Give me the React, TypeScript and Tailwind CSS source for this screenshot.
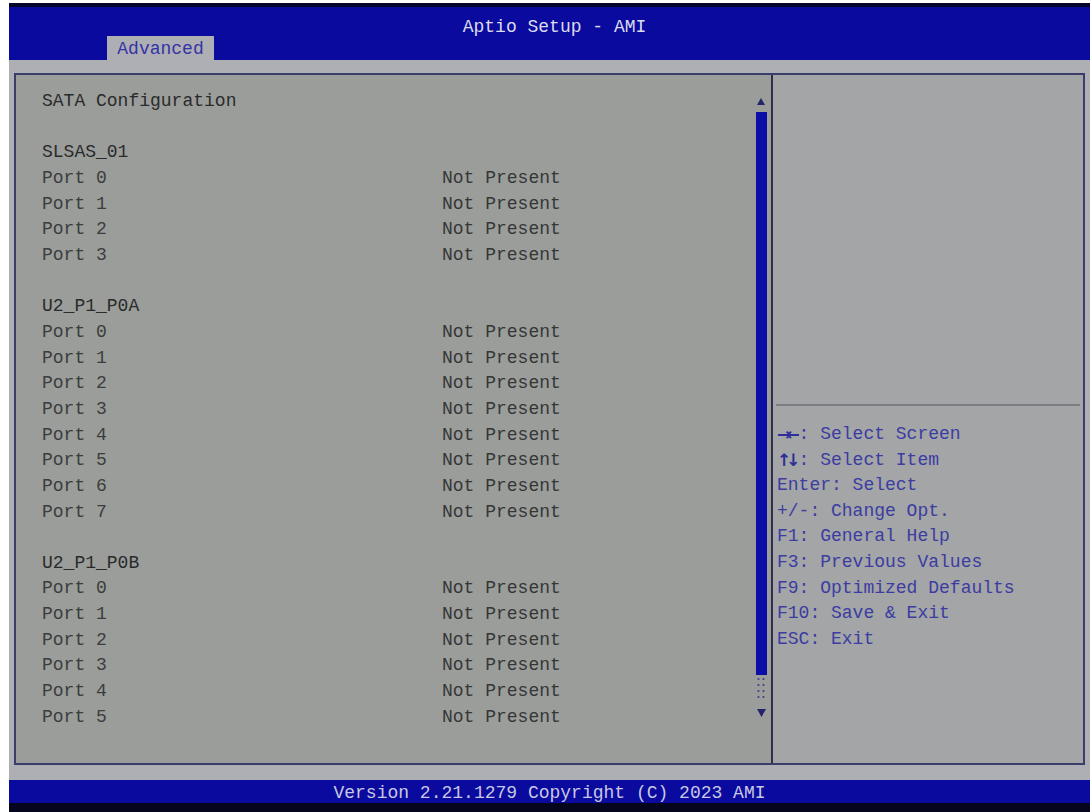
import React from "react";

type Row = { label?: string; value?: string; head?: boolean };

const group = (name: string, count: number): Row[] => [
  { label: name, head: true },
  ...Array.from({ length: count }, (_, i) => ({
    label: `Port ${i}`,
    value: "Not Present",
  })),
];

const rows: Row[] = [
  { label: "SATA Configuration", head: true },
  {},
  ...group("SLSAS_01", 4),
  {},
  ...group("U2_P1_P0A", 8),
  {},
  ...group("U2_P1_P0B", 6),
];

const help: [string, string][] = [
  ["→←", ": Select Screen"],
  ["↑↓", ": Select Item"],
  ["", "Enter: Select"],
  ["", "+/-: Change Opt."],
  ["", "F1: General Help"],
  ["", "F3: Previous Values"],
  ["", "F9: Optimized Defaults"],
  ["", "F10: Save & Exit"],
  ["", "ESC: Exit"],
];

const ScrollBar = () => (
  <div className="w-[12px] mr-[4px] flex flex-col items-center">
    <div className="h-[23px]" />
    <svg width="8" height="7" viewBox="0 0 8 7">
      <polygon points="4,0 8,7 0,7" fill="#24246a" />
    </svg>
    <div className="h-[7px]" />
    <div className="w-[11px] h-[563px] bg-[#0c0ca6]" />
    <svg width="10" height="24" viewBox="0 0 10 24" className="mt-[2px]">
      {[2, 8, 14, 20].map((y) => (
        <g key={y}>
          <circle cx="2.5" cy={y} r="1.1" fill="#40408a" />
          <circle cx="7.5" cy={y} r="1.1" fill="#40408a" />
        </g>
      ))}
    </svg>
    <svg width="9" height="8" viewBox="0 0 9 8" className="mt-[8px]">
      <polygon points="0,0 9,0 4.5,8" fill="#24246a" />
    </svg>
  </div>
);

export default function App() {
  return (
    <div className="w-[1090px] h-[812px] bg-white pt-[3px] pl-[9px] flex flex-col font-['Liberation_Mono','DejaVu_Sans_Mono',monospace] text-[18px]">
      <header className="h-[57px] bg-[#0a0a9e] border-t-[4px] border-[#06062a] flex flex-col">
        <div className="h-[29px] pt-[10px] leading-[20px] text-center text-[#dcdcec] pl-[10px]">
          Aptio Setup - AMI
        </div>
        <div className="ml-[98px] w-[107px] h-[24px] bg-[#aeafb4] text-[#3434a4] leading-[26px] text-center">
          Advanced
        </div>
      </header>

      <main className="flex-1 bg-[#aeafb4] pt-[13px] pl-[5px] pr-[5px] pb-[15px]">
        <div className="h-full flex border-2 border-[#3c3c6a]">
          <section className="flex bg-[#9a9d9a]">
            <div className="w-[739px] pl-[26px] pt-[14px]">
              {rows.map((r, i) => (
                <div key={i} className="h-[25.67px] leading-[25.67px] flex">
                  <span
                    className={`w-[400px] ${r.head ? "text-[#2a2a2a]" : "text-[#3c3c3c]"}`}
                  >
                    {r.label}
                  </span>
                  {r.value && <span className="text-[#363636]">{r.value}</span>}
                </div>
              ))}
            </div>
            <ScrollBar />
          </section>
          <section className="flex-1 border-l-2 border-[#2e2e50] bg-[#a3a5a6] flex flex-col">
            <div className="h-[329px]" />
            <div className="mx-[3px] h-[2px] bg-[#7c7c84]" />
            <div className="pl-[4px] pt-[16px]">
              {help.map(([arrows, text]) => (
                <div key={text} className="h-[25.6px] leading-[25.6px] text-[#3c3ca2] flex">
                  {arrows && (
                    <span className="w-[21.6px] overflow-hidden whitespace-nowrap text-[17px] font-bold font-['DejaVu_Sans',sans-serif] tracking-[-5px] text-[#2e2e9a]">
                      {arrows}
                    </span>
                  )}
                  <span>{text}</span>
                </div>
              ))}
            </div>
          </section>
        </div>
      </main>

      <footer className="h-[32px] bg-[#0a0a9e] border-b-[9px] border-[#05051e] text-center leading-[26px] text-[#c8c8e4]">
        Version 2.21.1279 Copyright (C) 2023 AMI
      </footer>
    </div>
  );
}
